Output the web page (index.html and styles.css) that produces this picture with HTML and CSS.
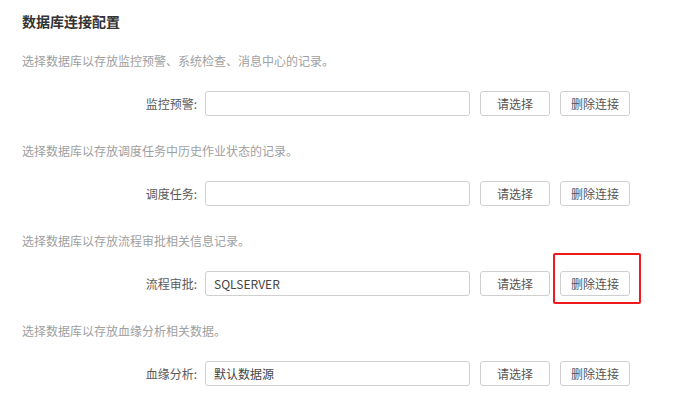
FILE: index.html
```html
<!DOCTYPE html>
<html lang="zh-CN">
<head>
    <meta charset="UTF-8">
    <meta name="viewport" content="width=device-width, initial-scale=1.0">
    <title>数据库连接配置</title>
    <link rel="stylesheet" href="styles.css">
</head>
<body>
    <div class="page">
        <h2 class="title">数据库连接配置</h2>

        <div class="section">
            <p class="desc">选择数据库以存放监控预警、系统检查、消息中心的记录。</p>
            <div class="row">
                <label class="label" for="alarm">监控预警:</label>
                <input id="alarm" class="field" type="text" value="">
                <button class="btn">请选择</button>
                <button class="btn">删除连接</button>
            </div>
        </div>

        <div class="section">
            <p class="desc">选择数据库以存放调度任务中历史作业状态的记录。</p>
            <div class="row">
                <label class="label" for="job">调度任务:</label>
                <input id="job" class="field" type="text" value="">
                <button class="btn">请选择</button>
                <button class="btn">删除连接</button>
            </div>
        </div>

        <div class="section">
            <p class="desc">选择数据库以存放流程审批相关信息记录。</p>
            <div class="row">
                <label class="label" for="flow">流程审批:</label>
                <input id="flow" class="field" type="text" value="SQLSERVER">
                <button class="btn">请选择</button>
                <span class="marked">
                    <button class="btn">删除连接</button>
                    <span class="highlight"></span>
                </span>
            </div>
        </div>

        <div class="section">
            <p class="desc">选择数据库以存放血缘分析相关数据。</p>
            <div class="row">
                <label class="label" for="lineage">血缘分析:</label>
                <input id="lineage" class="field" type="text" value="默认数据源">
                <button class="btn">请选择</button>
                <button class="btn">删除连接</button>
            </div>
        </div>
    </div>
</body>
</html>
```

FILE: styles.css
```css
body {
    margin: 0;
    background: #fff;
    font-family: "Noto Sans CJK SC", "Noto Sans", sans-serif;
    color: #333;
}
.page {
    padding: 9px 22px 0;
}
.title {
    margin: 0;
    font-size: 14px;
    font-weight: bold;
    line-height: 24px;
    color: #333;
}
.section {
    padding-bottom: 25px;
}
.section:first-of-type {
    margin-top: 18px;
}
.desc {
    margin: 0 0 20px;
    font-size: 12px;
    line-height: 20px;
    color: #a0a0a0;
}
.row {
    display: flex;
    align-items: center;
    height: 25px;
}
.label {
    width: 175px;
    margin-right: 8px;
    text-align: right;
    font-size: 12px;
    color: #5a5a5a;
}
.field {
    box-sizing: border-box;
    width: 265px;
    height: 25px;
    padding: 0 8px;
    border: 1px solid #cfcfcf;
    border-radius: 3px;
    font-family: inherit;
    font-size: 12px;
    color: #444;
    outline: none;
}
.btn {
    box-sizing: border-box;
    width: 70px;
    height: 25px;
    margin-left: 10px;
    padding: 0;
    background: #fff;
    border: 1px solid #cfcfcf;
    border-radius: 3px;
    font-family: inherit;
    font-size: 12px;
    color: #555;
    cursor: pointer;
}
.marked {
    position: relative;
    display: flex;
}
.highlight {
    position: absolute;
    top: -18px;
    left: 3px;
    right: -11px;
    bottom: -8px;
    border: 2px solid #f0191e;
    border-radius: 2px;
    pointer-events: none;
}
```
